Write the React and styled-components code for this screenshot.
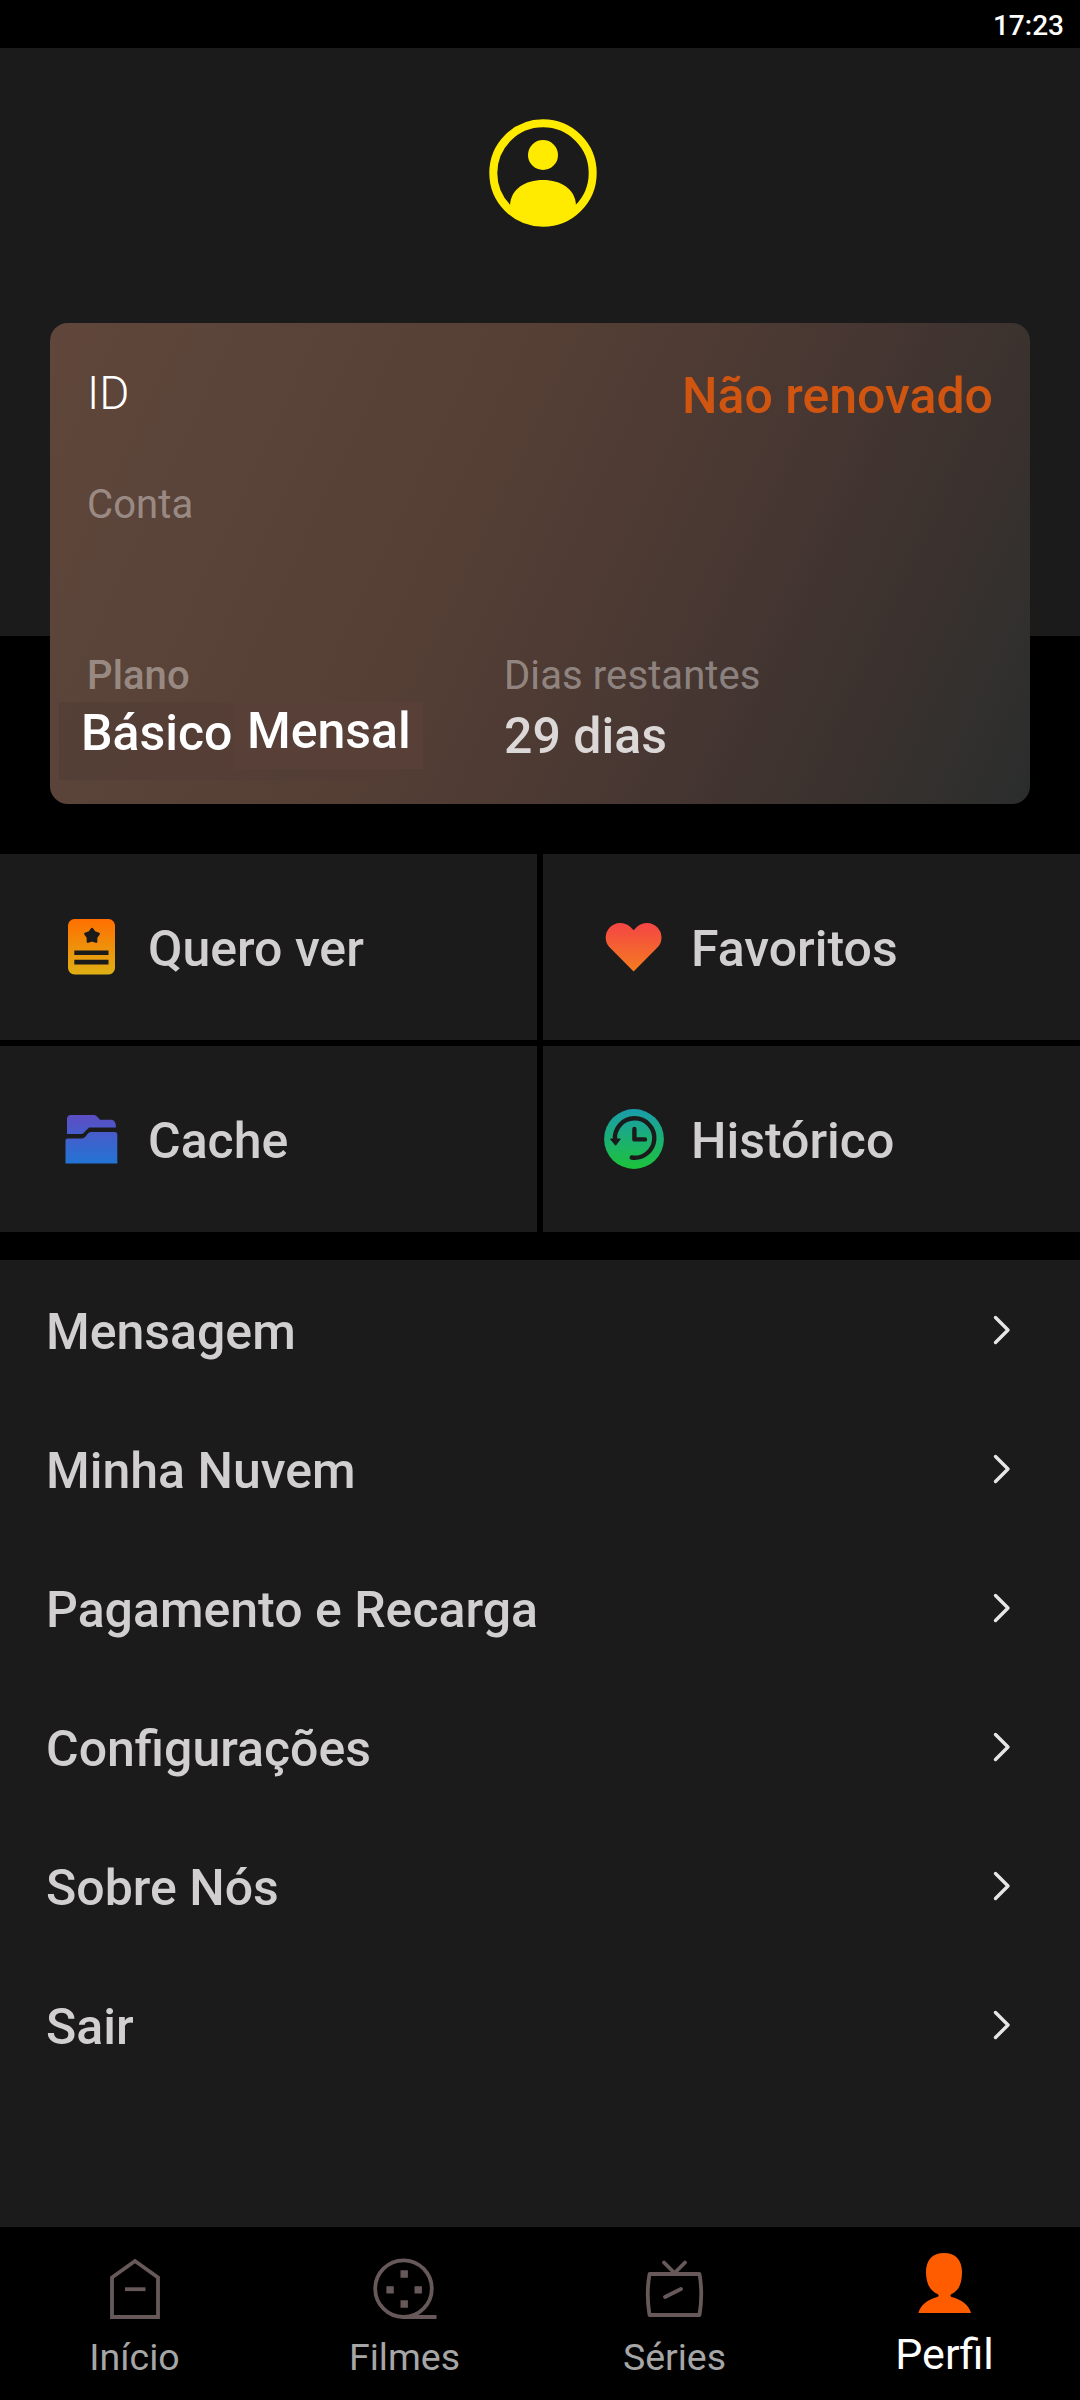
import React from "react";
import styled, { createGlobalStyle } from "styled-components";

const GlobalStyle = createGlobalStyle`
  * { box-sizing: border-box; }
  body { margin: 0; background: #000; font-family: Roboto, "Liberation Sans", sans-serif; }
`;

const Page = styled.div`
  display: flex;
  flex-direction: column;
  width: 1080px;
  height: 2400px;
  background: #000;
  overflow: hidden;
`;

const StatusBar = styled.header`
  display: flex;
  justify-content: flex-end;
  flex: none;
  height: 48px;
  padding-right: 16px;
  color: #fff;
  font-size: 28px;
  font-weight: 500;
  line-height: 51px;
`;

const Hero = styled.section`
  display: flex;
  justify-content: center;
  flex: none;
  height: 588px;
  padding: 71px 0 0 5px;
  background: #1b1b1b;
`;

const Icon = styled.svg`
  display: block;
  flex: none;
`;

const Card = styled.section`
  display: flex;
  flex-direction: column;
  flex: none;
  height: 481px;
  margin: -313px 50px 0;
  padding: 36px 37px 0;
  border-radius: 18px;
  background: linear-gradient(115deg, #60463b 0%, #5b4439 14%, #553f35 42%, #483732 65.5%, #39312e 84.5%, #32302e 92%, #2a2c2c 100%);
`;

const CardTop = styled.div`
  display: flex;
  justify-content: space-between;
  height: 122px;
`;

const IdLabel = styled.span`
  color: #fff;
  font-size: 46px;
  font-weight: 300;
  line-height: 68px;
`;

const Status = styled.span`
  color: #d05510;
  font-size: 50px;
  font-weight: 500;
  line-height: 74px;
`;

const Caption = styled.span`
  display: block;
  color: rgba(255, 255, 255, 0.4);
  font-size: 40px;
  font-weight: ${(p) => (p.$strong ? 500 : 400)};
  letter-spacing: 0.1px;
  line-height: 47px;
`;

const PlanGrid = styled.div`
  display: grid;
  grid-template-columns: 417px 1fr;
  margin-top: 124px;
`;

const PlanName = styled.div`
  display: flex;
  width: 364px;
  height: 78px;
  margin: 3px 0 0 -28px;
  background: rgba(83, 62, 53, 0.75);
  color: #fff;
  font-size: 50px;
  font-weight: 500;
`;

const PlanTier = styled.span`
  width: 174px;
  padding-left: 22px;
  line-height: 62px;
`;

const PlanPeriod = styled.span`
  width: 190px;
  height: 67px;
  padding-left: 14px;
  background: #584038;
  line-height: 58px;
`;

const DaysLeft = styled.div`
  margin-top: 7px;
  color: #dcd8d8;
  font-size: 50px;
  font-weight: 500;
  line-height: 60px;
`;

const Tiles = styled.nav`
  display: grid;
  flex: none;
  grid-template-columns: 537px 537px;
  grid-auto-rows: 186px;
  gap: 6px;
  margin-top: 50px;
`;

const Tile = styled.a`
  display: flex;
  align-items: center;
  gap: 24px;
  padding-left: 60px;
  background: #1b1b1b;
  color: #d2cfd0;
  font-size: 50px;
  font-weight: 500;
  line-height: 60px;
`;

const TileLabel = styled.span`
  padding-top: 4px;
`;

const Menu = styled.nav`
  flex: 1;
  margin-top: 28px;
  padding-top: 3px;
  background: #1b1b1b;
`;

const MenuRow = styled.a`
  display: flex;
  align-items: center;
  justify-content: space-between;
  height: 139px;
  padding: 0 67px 0 46px;
  color: #d2cfd0;
  font-size: 50px;
  font-weight: 500;
  line-height: 61px;
`;

const ChevronBox = styled(Icon)`
  margin-bottom: 6px;
`;

const TabBar = styled.nav`
  display: grid;
  flex: none;
  grid-template-columns: repeat(4, 1fr);
  height: 173px;
`;

const Tab = styled.a`
  display: flex;
  flex-direction: column;
  align-items: center;
  padding-top: 24px;
  color: ${(p) => (p.$active ? "#fff" : "#a6a6a6")};
  font-size: ${(p) => (p.$active ? 43 : 37.5)}px;
  line-height: 52px;
`;

const TabLabel = styled.span`
  margin-top: ${(p) => (p.$active ? 5 : 8)}px;
  margin-right: 1px;
`;

const Avatar = () => (
  <Icon width="108" height="108" viewBox="0 0 108 108">
    <circle cx="54" cy="54" r="49.700" fill="none" stroke="#ffeb00" strokeWidth="8" />
    <circle cx="54" cy="36" r="15" fill="#ffeb00" />
    <path d="M21 86C22 70 36 61 54 61S86 70 87 86C80 98 67 106 54 106S28 98 21 86Z" fill="#ffeb00" />
  </Icon>
);

const Gradient = ({ id, from, to }) => (
  <linearGradient id={id} x1="0" y1="0" x2="0" y2="1">
    <stop offset="0" stopColor={from} />
    <stop offset="1" stopColor={to} />
  </linearGradient>
);

const WatchlistIcon = () => (
  <Icon width="64" height="64" viewBox="0 0 64 64">
    <Gradient id="watch" from="#ff6f00" to="#dfb014" />
    <rect x="8" y="4" width="47" height="55.500" rx="6.500" fill="url(#watch)" />
    <path d="M32 14L34.600 17.400L38.700 18.800L36.200 22.400L36.100 26.700L32 25.400L27.900 26.700L27.800 22.400L25.300 18.800L29.400 17.400Z" fill="#1b1b1b" stroke="#1b1b1b" strokeWidth="2.400" strokeLinejoin="round" />
    <path d="M14.300 37.800H48.500M14.300 47.100H48.500" stroke="#1b1b1b" strokeWidth="4.600" />
  </Icon>
);

const FolderIcon = () => (
  <Icon width="64" height="64" viewBox="0 0 64 64">
    <linearGradient id="folder" gradientUnits="userSpaceOnUse" x1="0" y1="8" x2="0" y2="56">
      <stop offset="0" stopColor="#5d4dc4" />
      <stop offset="1" stopColor="#2374d4" />
    </linearGradient>
    <path d="M7 27V12Q7 8 11 8H34Q36 8 37.500 10L40 12.800H51Q56 13 56 20.500H29L23.500 26Q22.500 27 21 27Z" fill="url(#folder)" />
    <path d="M5.500 56.500V33.500Q5.500 31.500 7.500 31.500H22Q24 31.500 25.500 29.500L27.500 27Q29 25 31 25H55Q57.300 25 57.300 27.500V56.500Z" fill="url(#folder)" />
  </Icon>
);

const HeartIcon = () => (
  <Icon width="64" height="64" viewBox="0 0 64 64">
    <Gradient id="heart" from="#f44545" to="#f57c1f" />
    <path d="M30.600 56.400L6.300 32.100A14.600 14.600 0 0 1 26.900 11.500L30.600 15.200L34.300 11.500A14.600 14.600 0 0 1 54.900 32.100Z" fill="url(#heart)" />
  </Icon>
);

const HistoryIcon = () => (
  <Icon width="64" height="64" viewBox="0 0 64 64">
    <Gradient id="history" from="#1a9dac" to="#1cc23a" />
    <circle cx="31" cy="32" r="29.900" fill="url(#history)" />
    <path d="M12 33A19.700 19.700 0 1 1 28.700 50.500" fill="none" stroke="#1b1b1b" strokeWidth="4.400" strokeLinecap="round" />
    <path d="M7.500 32H17.300L12.600 38.300Z" fill="#1b1b1b" stroke="#1b1b1b" strokeLinejoin="round" />
    <path d="M31.400 22V32.400H42" fill="none" stroke="#1b1b1b" strokeWidth="4.400" strokeLinecap="round" strokeLinejoin="round" />
  </Icon>
);

const Chevron = () => (
  <ChevronBox width="20" height="32" viewBox="0 0 20 32">
    <path d="M2.500 3.500L15 16L2.500 28.500" fill="none" stroke="#e6e6e6" strokeWidth="3.400" strokeLinecap="round" strokeLinejoin="round" />
  </ChevronBox>
);

const TabIcon = ({ children }) => (
  <Icon width="72" height="72" viewBox="0 0 72 72" fill="none" stroke="#675959" strokeWidth="3.800">
    {children}
  </Icon>
);

const HomeIcon = () => (
  <TabIcon>
    <path d="M13 26.500L36 10L59 26.500V66H13Z" />
    <path d="M26 38.200H46.500" />
  </TabIcon>
);

const ReelIcon = () => (
  <TabIcon>
    <circle cx="34.500" cy="37.700" r="28.300" />
    <path d="M33 66H67.500" />
    <path d="M31.500 23h7.400M17.400 38.900h7.400M45.500 38.900h7.400M31.500 53h7.400" strokeWidth="7.400" />
  </TabIcon>
);

const TvIcon = () => (
  <TabIcon>
    <path d="M10.500 23H60.500Q64 43 60.500 64H10.500Q7 43 10.500 23Z" strokeLinejoin="round" />
    <path d="M25 11.500L35.500 22L46 11.500M26 46L42 38" strokeLinecap="round" />
  </TabIcon>
);

const PersonIcon = () => (
  <Icon width="72" height="72" viewBox="0 0 72 72">
    <path d="M35 2C46.500 2 53 9 53 21C53 33 49.500 40 42.500 43C41 44 41 45 42.500 46C52.500 48.500 60 54 62 62H9.500C11.500 54 18.500 48.500 28.500 46C30 45 30 44 28.500 43C21.500 40 17 33 17 21C17 9 23.500 2 35 2Z" fill="#ff5c00" />
  </Icon>
);

const tiles = [
  ["Quero ver", WatchlistIcon],
  ["Favoritos", HeartIcon],
  ["Cache", FolderIcon],
  ["Histórico", HistoryIcon],
];

const menu = ["Mensagem", "Minha Nuvem", "Pagamento e Recarga", "Configurações", "Sobre Nós", "Sair"];

const tabs = [
  ["Início", HomeIcon],
  ["Filmes", ReelIcon],
  ["Séries", TvIcon],
  ["Perfil", PersonIcon],
];

export default function App() {
  return (
    <Page>
      <GlobalStyle />
      <StatusBar>17:23</StatusBar>
      <Hero>
        <Avatar />
      </Hero>
      <Card>
        <CardTop>
          <IdLabel>ID</IdLabel>
          <Status>Não renovado</Status>
        </CardTop>
        <Caption>Conta</Caption>
        <PlanGrid>
          <div>
            <Caption $strong>Plano</Caption>
            <PlanName>
              <PlanTier>Básico</PlanTier>
              <PlanPeriod>Mensal</PlanPeriod>
            </PlanName>
          </div>
          <div>
            <Caption>Dias restantes</Caption>
            <DaysLeft>29 dias</DaysLeft>
          </div>
        </PlanGrid>
      </Card>
      <Tiles>
        {tiles.map(([label, TileIcon]) => (
          <Tile key={label}>
            <TileIcon />
            <TileLabel>{label}</TileLabel>
          </Tile>
        ))}
      </Tiles>
      <Menu>
        {menu.map((label) => (
          <MenuRow key={label}>
            <span>{label}</span>
            <Chevron />
          </MenuRow>
        ))}
      </Menu>
      <TabBar>
        {tabs.map(([label, Glyph]) => {
          const active = label === "Perfil";
          return (
            <Tab key={label} $active={active}>
              <Glyph />
              <TabLabel $active={active}>{label}</TabLabel>
            </Tab>
          );
        })}
      </TabBar>
    </Page>
  );
}
